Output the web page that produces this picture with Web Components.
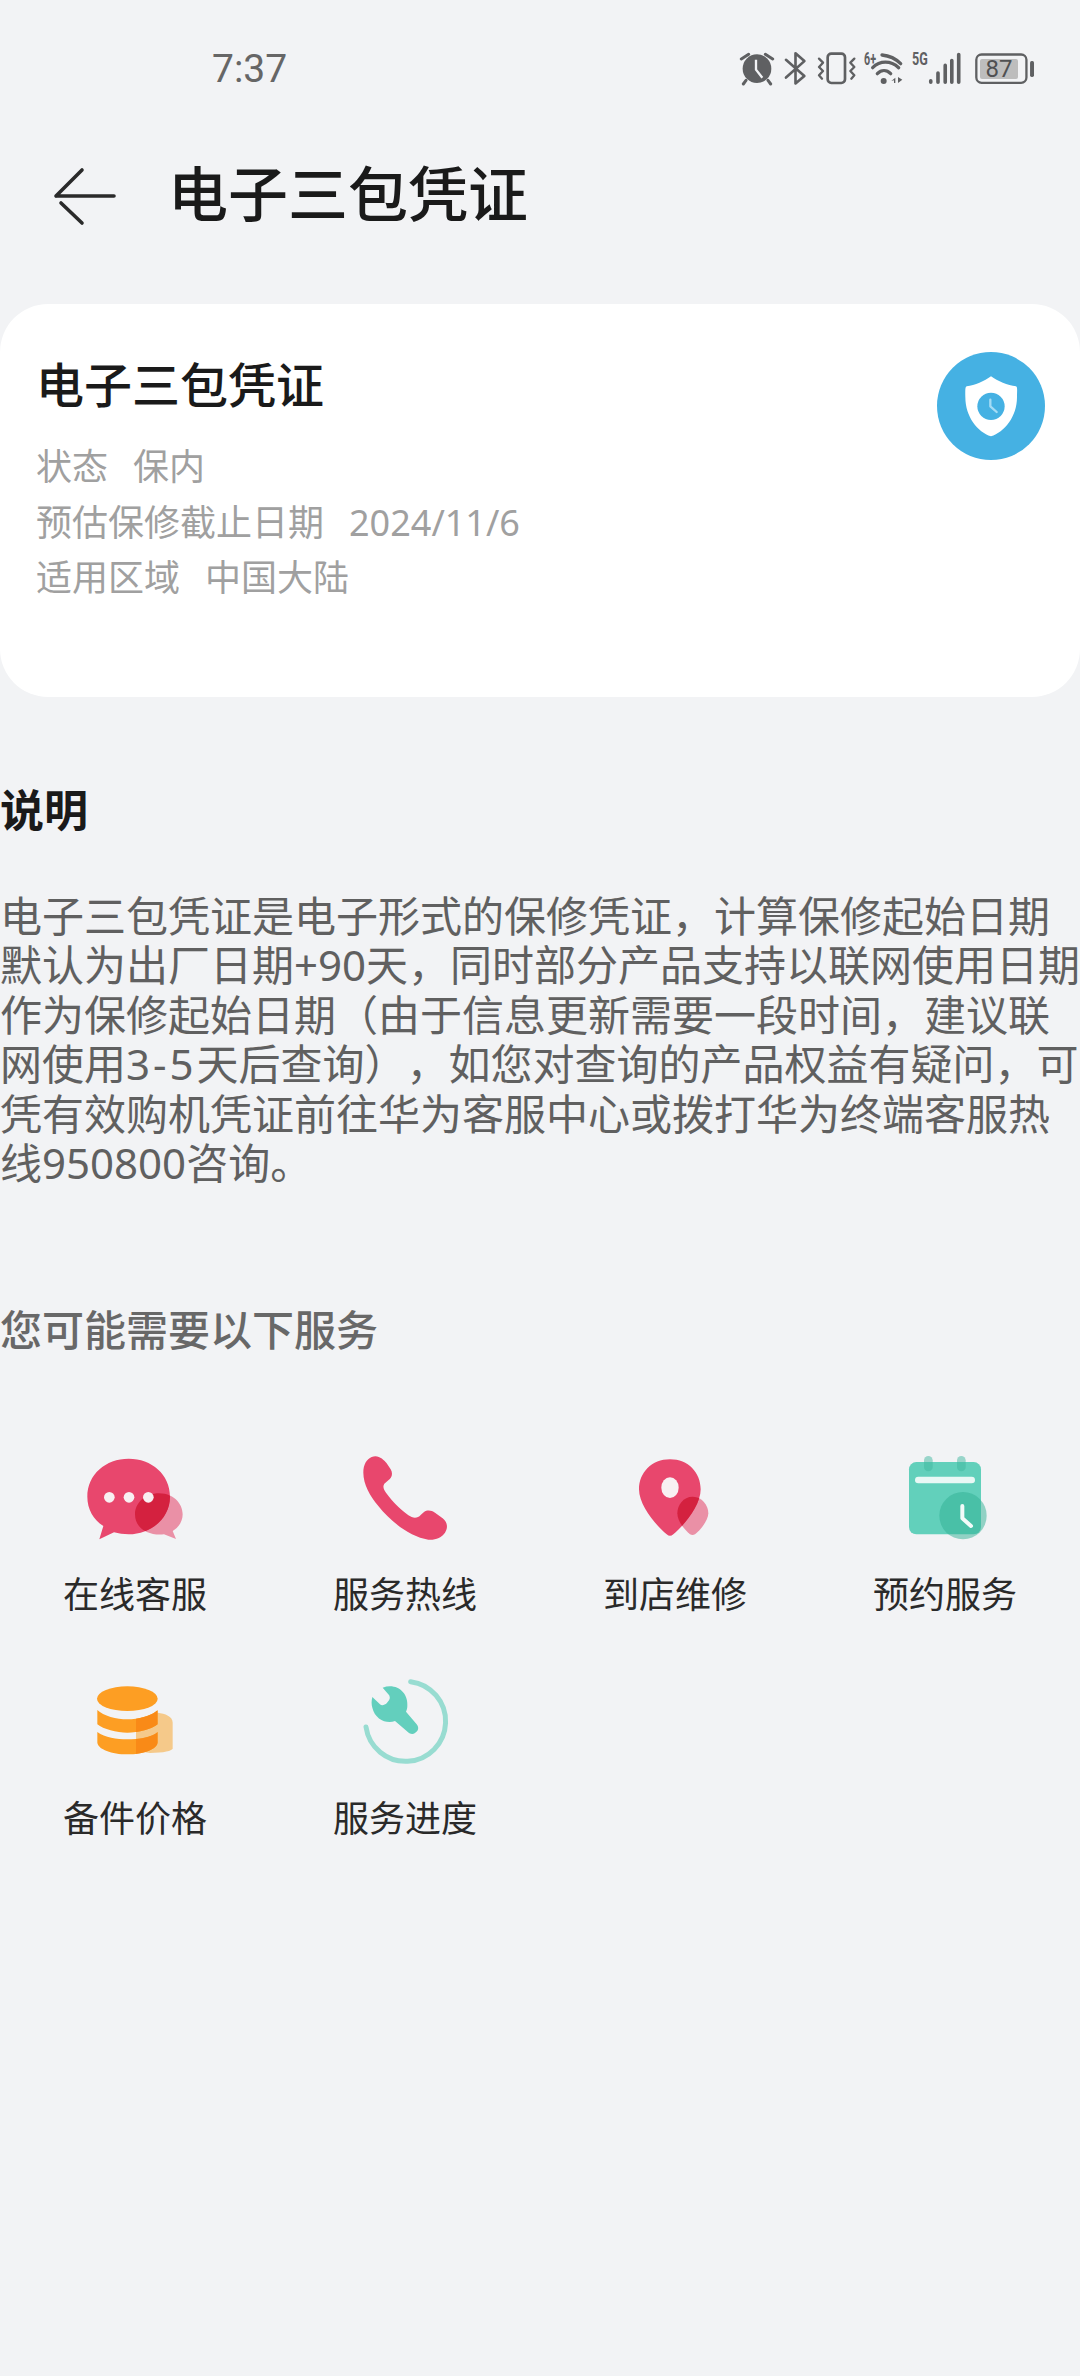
<!DOCTYPE html>
<html lang="zh-CN"><head><meta charset="utf-8"><title>电子三包凭证</title>
<style>
html,body{margin:0;padding:0;background:#f2f3f5;}
body{width:1080px;height:2376px;overflow:hidden;font-family:"Noto Sans","Noto Sans CJK SC",sans-serif;text-spacing-trim:space-all;}
</style></head><body>
<warranty-page>
  <status-bar></status-bar>
  <app-header>电子三包凭证</app-header>
  <warranty-card heading="电子三包凭证">
    <meta-row label="状态">保内</meta-row>
    <meta-row label="预估保修截止日期">2024/11/6</meta-row>
    <meta-row label="适用区域">中国大陆</meta-row>
  </warranty-card>
  <info-section heading="说明">电子三包凭证是电子形式的保修凭证，计算保修起始日期<br>默认为出厂日期+90天，同时部分产品支持以联网使用日期<br>作为保修起始日期（由于信息更新需要一段时间，建议联<br>网使用<span style="letter-spacing:3px">3-5</span>天后查询），如您对查询的产品权益有疑问，可<br>凭有效购机凭证前往华为客服中心或拨打华为终端客服热<br>线950800咨询。</info-section>
  <service-grid heading="您可能需要以下服务">
    <service-item icon="chat">在线客服</service-item>
    <service-item icon="phone">服务热线</service-item>
    <service-item icon="pin">到店维修</service-item>
    <service-item icon="calendar">预约服务</service-item>
    <service-item icon="parts">备件价格</service-item>
    <service-item icon="progress">服务进度</service-item>
  </service-grid>
</warranty-page>
<script>
function def(name, css, html){
  class E extends HTMLElement{
    constructor(){super();const r=this.attachShadow({mode:'open'});
      r.innerHTML='<style>'+css+'</style>'+(typeof html==='function'?html(this):html);}
  }
  customElements.define(name,E);
}
def('warranty-page',':host{display:flex;flex-direction:column;width:1080px;height:2376px;background:#f2f3f5}','<slot></slot>');

const SC='#5f6062';
def('status-bar',
`:host{display:flex;align-items:flex-start;height:90px;box-sizing:border-box;padding:0 0 0 212px;color:${SC}}
.t{font:400 39px/40px Roboto,sans-serif;color:#666;margin-top:49px}
.icons{margin-left:auto;margin-right:45px;display:flex;margin-top:51px}
svg{display:block;height:35px;width:auto;overflow:visible}
.bat{position:relative;display:flex}
.n{position:absolute;left:5px;top:8px;width:38px;height:20px;background:#bdbdbd;border-radius:2px;font:400 24px/20px Roboto,sans-serif;text-align:center;color:#4f5052}
`,
`<span class="t">7:37</span><div class="icons">
<svg viewBox="120 62 102 105" style="width:34px"><g fill="${SC}"><circle cx="171" cy="115" r="43"/><path d="M124 86 146 72M218 86 196 72M138 150l-8 11M204 150l8 11" stroke="${SC}" stroke-width="9" stroke-linecap="round"/></g><path d="M168 88v30l19 24" fill="none" stroke="#f2f3f5" stroke-width="7"/></svg>
<svg viewBox="250 62 70 105" style="width:23px;margin-left:10px"><path d="M256 88 312 137 285 160V68L312 92 256 142" fill="none" stroke="${SC}" stroke-width="8" stroke-linejoin="round" stroke-linecap="round"/></svg>
<svg viewBox="350 62 120 105" style="width:40px;margin-left:10px"><rect x="382" y="70" width="52" height="88" rx="11" fill="none" stroke="${SC}" stroke-width="8"/><path d="M356 85 368 97 356 110 368 122 356 135 365 145M462 85 450 97 462 110 450 122 462 135 453 145" fill="none" stroke="${SC}" stroke-width="7" stroke-linecap="round" stroke-linejoin="round"/></svg>
<svg viewBox="488 62 120 105" style="width:40px;margin-left:7px"><text x="488" y="105" font-family="Roboto,sans-serif" font-weight="700" font-size="54" textLength="36" lengthAdjust="spacingAndGlyphs" fill="${SC}">6+</text><path d="M542 74C562 76 584 86 598 100M514 112C536 90 568 90 592 112M528 130C540 118 556 118 568 130" fill="none" stroke="${SC}" stroke-width="10" stroke-linecap="round"/><circle cx="547" cy="152" r="9" fill="${SC}"/><path d="M570 152 582 142V158H578V150ZM590 140V158L603 148Z" fill="${SC}"/></svg>
<svg viewBox="630 62 152 105" style="width:50px;margin-left:8px"><text x="630" y="105" font-family="Roboto,sans-serif" font-weight="700" font-size="54" textLength="48" lengthAdjust="spacingAndGlyphs" fill="${SC}">5G</text><path d="M687 152v4M709 128v28M731 105v51M751 90v66M772 72v84" stroke="${SC}" stroke-width="11" stroke-linecap="round"/></svg>
<div class="bat" style="margin-left:13px"><svg viewBox="815 62 182 105" style="width:60px"><rect x="819" y="72" width="152" height="86" rx="16" fill="none" stroke="${SC}" stroke-width="7"/><rect x="982" y="92" width="12" height="48" rx="5" fill="${SC}"/></svg><span class="n">87</span></div>
</div>`);

def('app-header',
`:host{display:flex;align-items:flex-start;height:214px;box-sizing:border-box;padding:69px 0 0 55px;font-weight:500;font-size:60px;line-height:70px;color:#1a1a1a}
svg{width:60px;height:56px;margin:10px 53px 0 0;flex:none;overflow:visible}`,
`<svg viewBox="0 0 60 56"><path d="M1 27H59M27 1 1 27M6 34 27 54" fill="none" stroke="#2a2a2a" stroke-width="3.6" stroke-linecap="round" stroke-linejoin="round"/></svg><slot></slot>`);

def('warranty-card',
`:host{display:flex;justify-content:space-between;align-items:flex-start;height:393px;box-sizing:border-box;background:#fff;border-radius:48px;padding:51px 35px 0 36px}
h2{margin:0 0 24px;font-weight:500;font-size:48px;line-height:60px;color:#1a1a1a}
svg{width:108px;height:108px;flex:none;margin-top:-3px}`,
h=>`<div><h2>${h.getAttribute('heading')}</h2><slot></slot></div>
<svg viewBox="108 65 324 324"><circle cx="270" cy="227" r="162" fill="#45b1e3"/><path d="M270 138C290 152 320 165 345 168 350 170 348 180 348 200 348 260 310 305 270 318 230 305 193 260 193 200 193 180 192 170 197 168 222 165 250 152 270 138Z" fill="#fff"/><circle cx="270" cy="228" r="41" fill="#45b1e3"/><path d="M268 208V228L287 245" fill="none" stroke="#a5dcf5" stroke-width="7" stroke-linecap="round" stroke-linejoin="round"/></svg>`);

def('meta-row',
`:host{display:flex;gap:25px;font-size:36px;line-height:55.5px;color:#a0a0a0}`,
h=>`<span>${h.getAttribute('label')}</span><span><slot></slot></span>`);

def('info-section',
`:host{display:block;padding-top:82px}
h3{margin:0 0 50px;font-weight:700;font-size:44px;line-height:62px;color:#1a1a1a}
p{margin:0;font-size:42px;line-height:49.4px;color:#606060;white-space:nowrap}`,
h=>`<h3>${h.getAttribute('heading')}</h3><p><slot></slot></p>`);

const CHAT_B='M236 83C305 83 360 130 360 197 360 260 305 310 236 310 222 310 205 308 192 304L148 325 160 285C130 265 112 235 112 197 112 130 167 83 236 83Z';
const CHAT_S='M327 187C367 187 398 215 398 250 398 272 385 290 368 300L378 324 342 310C300 315 255 295 255 250 255 215 287 187 327 187Z';
const PIN_B='M210 85C265 85 302 125 302 175 302 225 250 285 220 310 213 316 207 316 200 310 170 285 117 225 117 175 117 125 155 85 210 85Z';
const PIN_S='M278 197C305 197 325 222 325 247 325 270 298 300 285 310 280 313 275 313 270 310 255 297 232 272 232 247 232 222 250 197 278 197Z';
const BANDS='<path d="M142 147C160 165 200 175 232 175 265 175 305 165 323 147V190C305 205 265 215 232 215 200 215 160 205 142 190Z"/><path d="M142 213C165 230 200 235 232 235 265 235 305 230 323 213V245C320 265 280 280 232 280 185 280 145 265 142 245Z"/>';
const ICONS={
chat:`<svg viewBox="111 60 288 288"><defs><clipPath id="c"><path d="${CHAT_B}"/></clipPath></defs><path d="${CHAT_S}" fill="#ea90a6"/><path d="${CHAT_B}" fill="#e8476d"/><g clip-path="url(#c)"><path d="${CHAT_S}" fill="#d4213f"/></g><g fill="#f8f0f2"><circle cx="178" cy="199" r="16"/><circle cx="237" cy="199" r="16"/><circle cx="295" cy="199" r="16"/></g></svg>`,
phone:`<svg viewBox="921 60 288 288"><path d="M965 78C985 70 1000 85 1010 97L1022 115C1030 128 1025 140 1015 148L1003 158C998 165 1000 175 1008 185 1030 215 1060 245 1085 258 1095 263 1105 260 1112 252L1122 243C1132 236 1145 238 1155 245L1178 262C1192 273 1195 290 1185 305 1175 320 1155 328 1135 326 1080 318 1020 270 985 225 960 195 940 160 940 125 940 100 950 85 965 78Z" fill="#e8476d"/></svg>`,
pin:`<svg viewBox="81 60 288 288"><defs><clipPath id="c"><path d="${PIN_B}"/></clipPath></defs><path d="${PIN_S}" fill="#ea90a6"/><path d="${PIN_B}" fill="#e8476d"/><g clip-path="url(#c)"><path d="${PIN_S}" fill="#d4213f"/></g><ellipse cx="210" cy="170" rx="26" ry="31" fill="#f8f0f2"/></svg>`,
calendar:`<svg viewBox="891 60 288 288"><rect x="927" y="93" width="216" height="217" rx="22" fill="#62d0bb"/><rect x="972" y="75" width="26" height="46" rx="13" fill="#3fb8a0" fill-opacity=".5"/><rect x="1071" y="75" width="26" height="46" rx="13" fill="#3fb8a0" fill-opacity=".5"/><rect x="945" y="137" width="180" height="20" rx="10" fill="#e9f8f5"/><circle cx="1089" cy="254" r="71" fill="#2faf94" fill-opacity=".5"/><path d="M1087 225V262L1113 285" fill="none" stroke="#f2fbf9" stroke-width="12" stroke-linecap="round" stroke-linejoin="round"/></svg>`,
parts:`<svg viewBox="111 42 288 288"><defs><clipPath id="c"><path d="M258 150H323V280H258Z"/></clipPath></defs><path d="M258 175 323 155C345 158 368 165 368 185V262C368 270 340 276 300 276L258 270Z" fill="#f5c98a"/><g fill="#fd9e23"><ellipse cx="232" cy="113" rx="91" ry="37"/>${BANDS}</g><g fill="#f98a17" clip-path="url(#c)">${BANDS}</g></svg>`,
progress:`<svg viewBox="921 42 288 288"><path d="M1082 62A120 120 0 1 1 948 198" fill="none" stroke="#98dcd1" stroke-width="15" stroke-linecap="round"/><path d="M998 80C1040 65 1075 95 1072 135 1072 142 1070 148 1068 152L1100 190C1108 200 1105 210 1095 216 1087 222 1078 218 1070 210L1035 180C1010 190 975 175 967 140 964 130 964 120 967 108L990 130C995 135 1005 132 1010 127L1017 118C1021 112 1020 105 1015 100Z" fill="#63cfbd"/></svg>`
};
def('service-grid',
`:host{display:block;padding-top:112px}
h3{margin:0 0 90px;font-weight:500;font-size:42px;line-height:62px;color:#686868}
.g{display:grid;grid-template-columns:repeat(4,270px);grid-auto-rows:224px}`,
h=>`<h3>${h.getAttribute('heading')}</h3><div class="g"><slot></slot></div>`);
def('service-item',
`:host{display:flex;flex-direction:column;align-items:center;font-size:36px;line-height:50px;color:#2a2a2a}
svg{width:96px;height:96px;display:block;margin-bottom:23px;overflow:visible}`,
h=>ICONS[h.getAttribute('icon')]+'<slot></slot>');
</script>
</body></html>
